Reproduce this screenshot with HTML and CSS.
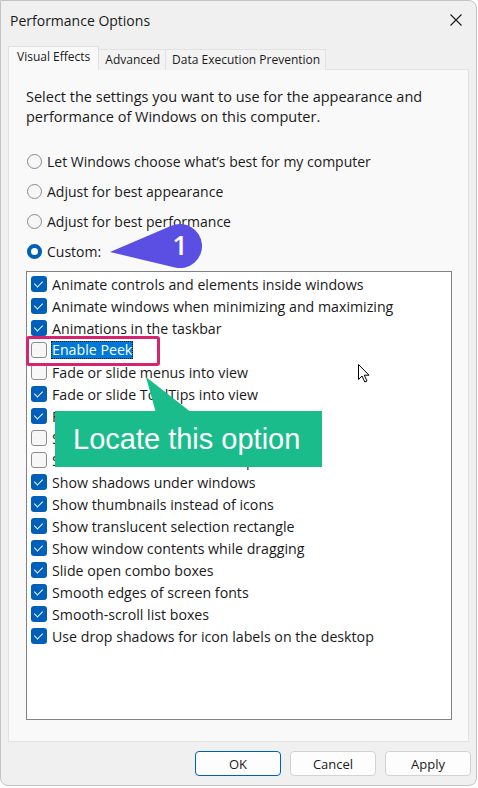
FILE: index.html
```html
<!DOCTYPE html>
<html>
<head>
<meta charset="utf-8">
<link rel="stylesheet" href="styles.css">
</head>
<body>
<div class="window">
  <div class="titlebar">
    <span class="title">Performance Options</span>
    <svg class="close" width="12" height="12" viewBox="0 0 12 12"><path d="M0.5 0.5 L11.5 11.5 M11.5 0.5 L0.5 11.5" stroke="#1a1a1a" stroke-width="1.1" fill="none"/></svg>
  </div>
  <div class="tabs">
    <div class="tab active">Visual Effects</div>
    <div class="tab">Advanced</div>
    <div class="tab">Data Execution Prevention</div>
  </div>
  <div class="panel">
    <p class="desc">Select the settings you want to use for the appearance and<br>performance of Windows on this computer.</p>
    <div class="radios">
      <div class="radio-row"><span class="radio"></span><span>Let Windows choose what’s best for my computer</span></div>
      <div class="radio-row"><span class="radio"></span><span>Adjust for best appearance</span></div>
      <div class="radio-row"><span class="radio"></span><span>Adjust for best performance</span></div>
      <div class="radio-row"><span class="radio on"></span><span>Custom:</span></div>
    </div>
    <div class="list">
      <div class="item"><span class="cb on"></span><span>Animate controls and elements inside windows</span></div>
      <div class="item"><span class="cb on"></span><span>Animate windows when minimizing and maximizing</span></div>
      <div class="item"><span class="cb on"></span><span>Animations in the taskbar</span></div>
      <div class="item"><span class="cb"></span><span class="sel">Enable Peek</span></div>
      <div class="item"><span class="cb"></span><span>Fade or slide menus into view</span></div>
      <div class="item"><span class="cb on"></span><span>Fade or slide ToolTips into view</span></div>
      <div class="item"><span class="cb on"></span><span>Fade out menu items after clicking</span></div>
      <div class="item"><span class="cb"></span><span>Save taskbar thumbnail previews</span></div>
      <div class="item"><span class="cb"></span><span>Show shadows under mouse pointer</span></div>
      <div class="item"><span class="cb on"></span><span>Show shadows under windows</span></div>
      <div class="item"><span class="cb on"></span><span>Show thumbnails instead of icons</span></div>
      <div class="item"><span class="cb on"></span><span>Show translucent selection rectangle</span></div>
      <div class="item"><span class="cb on"></span><span>Show window contents while dragging</span></div>
      <div class="item"><span class="cb on"></span><span>Slide open combo boxes</span></div>
      <div class="item"><span class="cb on"></span><span>Smooth edges of screen fonts</span></div>
      <div class="item"><span class="cb on"></span><span>Smooth-scroll list boxes</span></div>
      <div class="item"><span class="cb on"></span><span>Use drop shadows for icon labels on the desktop</span></div>
    </div>
  </div>
  <div class="buttons">
    <button class="btn default">OK</button>
    <button class="btn">Cancel</button>
    <button class="btn">Apply</button>
  </div>
</div>

<div class="highlight-box"></div>

<svg class="callout-one" width="120" height="60" viewBox="100 220 120 60">
  <path d="M110,252 L171.4,225.8 A22,22 0 1,1 174.9,267.4 Z" fill="#5b4ee3"/>
</svg>
<span class="callout-one-text">1</span>

<svg class="callout-green-tip" width="60" height="40" viewBox="140 375 60 40">
  <polygon points="146,377 156,413 192,413" fill="#1bbc8b"/>
</svg>
<div class="callout-green">Locate this option</div>

<svg class="cursor" width="13" height="19" viewBox="0 0 13 19">
  <path d="M0.5,0.5 L0.5,15.5 L4,12 L6.8,18 L9,17 L6.3,11.2 L11,11.2 Z" fill="#fff" stroke="#000" stroke-width="1" stroke-linejoin="round"/>
</svg>
</body>
</html>
```
FILE: styles.css
```css
html, body {
  margin: 0;
  padding: 0;
}
body {
  position: relative;
  width: 478px;
  height: 788px;
  background: #ffffff;
  font-family: "Open Sans", "Noto Sans", sans-serif;
  color: #1a1a1a;
  overflow: hidden;
}
.window {
  box-sizing: border-box;
  width: 477px;
  height: 786px;
  background: #f0f0f0;
  border: 1px solid #c4c4c4;
  border-radius: 0 8px 8px 8px;
  display: flex;
  flex-direction: column;
}
.titlebar {
  height: 41px;
  display: flex;
  align-items: center;
  justify-content: space-between;
  padding: 0 14px 0 9px;
}
.title {
  font-size: 14px;
  margin-top: -3px;
}
.close {
  margin-top: -3px;
}
.tabs {
  display: flex;
  align-items: flex-end;
  padding-left: 7px;
  margin-top: 4px;
  position: relative;
  z-index: 2;
  margin-bottom: -1px;
}
.tab {
  box-sizing: border-box;
  height: 21px;
  font-size: 12px;
  line-height: 20px;
  padding: 0 5px 0 6px;
  background: #f3f3f3;
  border: 1px solid #e2e2e2;
  border-bottom: none;
  margin-left: -1px;
}
.tab:first-child {
  margin-left: 0;
}
.tab.active {
  height: 24px;
  background: #f9f9f9;
  padding: 0 8px 0 8px;
  line-height: 20px;
  border-color: #e0e0e0;
  position: relative;
  z-index: 3;
}
.panel {
  box-sizing: border-box;
  margin: 0 7px;
  width: 461px;
  height: 673px;
  background: #f9f9f9;
  border: 1px solid #e2e2e2;
  padding: 17px 17px 0 17px;
}
.desc {
  margin: 0;
  font-size: 14.5px;
  line-height: 20px;
}
.radios {
  margin-top: 19px;
  display: flex;
  flex-direction: column;
}
.radio-row {
  height: 30px;
  display: flex;
  align-items: center;
  font-size: 14px;
  gap: 5px;
}
.radio {
  box-sizing: border-box;
  width: 15px;
  height: 15px;
  margin-left: 1px;
  border-radius: 50%;
  border: 1px solid #8a8a8a;
  background: #f6f6f6;
}
.radio.on {
  border: 4px solid #005fb8;
  background: #ffffff;
}
.list {
  box-sizing: border-box;
  margin-top: 5px;
  width: 426px;
  height: 449px;
  background: #ffffff;
  border: 1px solid #828282;
  padding: 1px 0 0 4px;
}
.item {
  height: 22px;
  display: flex;
  align-items: center;
  gap: 5px;
  font-size: 14.2px;
  white-space: nowrap;
}
.cb {
  box-sizing: border-box;
  flex: none;
  width: 16px;
  height: 16px;
  border-radius: 3px;
  border: 1px solid #8c8c8c;
  background: #f7f7f7;
  position: relative;
}
.cb.on {
  border: none;
  background: #005fb8;
}
.cb.on::after {
  content: "";
  position: absolute;
  left: 5px;
  top: 3px;
  width: 4px;
  height: 7px;
  border: solid #ffffff;
  border-width: 0 1.3px 1.3px 0;
  transform: rotate(45deg);
}
.sel {
  background: #0078d7;
  color: #ffffff;
  outline: 1px dotted #1a1a1a;
  outline-offset: -1px;
  line-height: 18px;
  padding: 0 1px;
  margin-left: -1px;
}
.buttons {
  display: flex;
  justify-content: flex-end;
  gap: 9px;
  padding: 9px 5px 0 0;
}
.btn {
  box-sizing: border-box;
  width: 86px;
  height: 25px;
  font-family: "Open Sans", "Noto Sans", sans-serif;
  font-size: 13px;
  color: #1a1a1a;
  background: #fdfdfd;
  border: 1px solid #d3d3d3;
  border-radius: 4px;
  padding: 0;
}
.btn.default {
  border: 1.5px solid #005fb8;
}
.highlight-box {
  position: absolute;
  left: 26px;
  top: 336px;
  width: 134px;
  height: 30px;
  box-sizing: border-box;
  border: 3px solid #d6246e;
  border-radius: 3px;
}
.callout-one {
  position: absolute;
  left: 100px;
  top: 220px;
}
.callout-one-text {
  position: absolute;
  left: 158px;
  top: 226px;
  width: 44px;
  text-align: center;
  font-family: "Open Sans", sans-serif;
  font-weight: 600;
  font-size: 27px;
  line-height: 38px;
  color: #ffffff;
}
.callout-green-tip {
  position: absolute;
  left: 140px;
  top: 375px;
}
.callout-green {
  position: absolute;
  left: 55px;
  top: 411px;
  width: 267px;
  height: 56px;
  background: #1bbc8b;
  color: #ffffff;
  font-family: "Liberation Sans", Arial, sans-serif;
  font-size: 29px;
  line-height: 56px;
  box-sizing: border-box;
  padding-left: 18px;
}
.cursor {
  position: absolute;
  left: 358px;
  top: 364px;
}
```
